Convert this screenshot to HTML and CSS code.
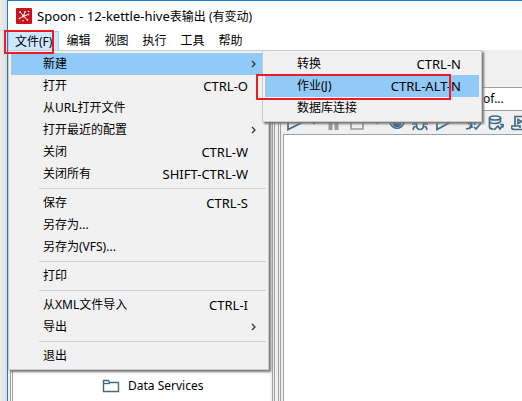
FILE: index.html
```html
<!DOCTYPE html>
<html lang="zh-CN">
<head>
<meta charset="utf-8">
<title>Spoon - 12-kettle-hive表输出 (有变动)</title>
<link rel="stylesheet" href="styles.css">
</head>
<body>
<div class="window">
  <header class="titlebar">
    <svg class="logo" viewBox="0 0 16 16" aria-hidden="true">
      <rect width="16" height="16" rx="1" fill="#c9101d"/>
      <g stroke="#fff" stroke-width="1" fill="#fff">
        <path d="M7.500 8 4 4M7.500 8 9 4M7.500 8l5-1.500M7.500 8l-4 2.500M7.500 8l4 4"/>
        <circle cx="7.500" cy="8" r="1"/><circle cx="4" cy="4" r=".5"/><circle cx="9" cy="3.800" r=".4"/>
        <circle cx="12.500" cy="6.500" r=".4"/><circle cx="3.500" cy="10.500" r=".4"/><circle cx="11.500" cy="12" r=".5"/>
      </g>
      <circle cx="12.500" cy="3.500" r=".8" fill="#fff"/><circle cx="7" cy="12.800" r=".8" fill="#fff"/>
    </svg>
    <h1><span class="latin">Spoon - 12-kettle-hive</span>表输出 (有变动)</h1>
  </header>

  <nav class="menubar">
    <div class="entry">
      <button class="top open">文件(F)</button>
      <div class="menu file-menu">
        <div class="parent">
          <button class="item active"><span>新建</span><svg class="chevron" viewBox="0 0 6 8"><path d="M1 1l3 3-3 3"/></svg></button>
          <div class="menu new-menu">
            <button class="item"><span>转换</span><kbd>CTRL-N</kbd></button>
            <button class="item active"><span>作业(J)</span><kbd>CTRL-ALT-N</kbd></button>
            <button class="item"><span>数据库连接</span></button>
            <i class="mark mark-job"></i>
          </div>
        </div>
        <button class="item"><span>打开</span><kbd>CTRL-O</kbd></button>
        <button class="item"><span>从URL打开文件</span></button>
        <button class="item"><span>打开最近的配置</span><svg class="chevron" viewBox="0 0 6 8"><path d="M1 1l3 3-3 3"/></svg></button>
        <button class="item"><span>关闭</span><kbd>CTRL-W</kbd></button>
        <button class="item"><span>关闭所有</span><kbd>SHIFT-CTRL-W</kbd></button>
        <hr>
        <button class="item"><span>保存</span><kbd>CTRL-S</kbd></button>
        <button class="item"><span>另存为...</span></button>
        <button class="item"><span>另存为(VFS)...</span></button>
        <hr>
        <button class="item"><span>打印</span></button>
        <hr>
        <button class="item"><span>从XML文件导入</span><kbd>CTRL-I</kbd></button>
        <button class="item"><span>导出</span><svg class="chevron" viewBox="0 0 6 8"><path d="M1 1l3 3-3 3"/></svg></button>
        <hr>
        <button class="item"><span>退出</span></button>
      </div>
      <i class="mark mark-file"></i>
    </div>
    <button class="top">编辑</button>
    <button class="top">视图</button>
    <button class="top">执行</button>
    <button class="top">工具</button>
    <button class="top">帮助</button>
  </nav>

  <main class="workspace">
    <aside class="explorer">
      <div class="tree">
        <div class="node">
          <svg class="folder" viewBox="0 0 18 14"><path d="M1.500 12.500v-11h5l1 2h9v9z"/><path d="M2 4.500h6"/></svg>
          <span>Data Services</span>
        </div>
      </div>
    </aside>
    <div class="sash"></div>
    <section class="editor">
      <div class="tab"><span>of...</span></div>
      <div class="toolbar">
        <svg class="tool" viewBox="0 0 16 16"><path d="M2 1.500v13L15 8z"/></svg>
        <svg class="drop" viewBox="0 0 10 4"><path d="M2 0h6L5 3.500z"/></svg>
        <svg class="tool muted" viewBox="0 0 16 16"><path d="M4.500 2v13M10.500 2v13" stroke-width="4"/></svg>
        <svg class="tool muted" viewBox="0 0 16 16"><path d="M2 2h12v12H2z"/></svg>
        <svg class="drop muted" viewBox="0 0 10 4"><path d="M2 0h6L5 3.500z"/></svg>
        <svg class="tool" viewBox="0 0 16 16"><path d="M1 8c3-6 11-6 14 0-3 7-11 7-14 0z"/><circle cx="8" cy="7.500" r="4" fill="#426a89"/></svg>
        <svg class="tool" viewBox="0 0 16 16"><path d="M4.500 6c0-4 7-4 7 0v4c0 6-7 6-7 0zM1 3l4 3M15 3l-4 3M0 9h5M16 9h-5M1 15l1-3 3-1M15 15l-1-3-3-1"/></svg>
        <svg class="tool" viewBox="0 0 16 16"><path d="M2 1.500v13L14 8z"/></svg>
        <svg class="tool first-check" viewBox="0 0 16 16"><path d="M1 14l4-1 1-4M6 5l1 8M3 9l3-2M9 12l2 2 5-6M9 7l1 3"/></svg>
        <svg class="tool" viewBox="0 0 16 16"><path d="M12.500 7V3M1.500 3v9c0 1.500 2 2 4 2"/><ellipse cx="7" cy="3" rx="5.500" ry="2"/><path d="M1.500 7c2 2 8 2 11 0M6 15l4-4 2 3 3-4M12 9.500h3v3"/></svg>
        <svg class="tool" viewBox="0 0 16 16"><path d="M4 11V1.500h11v13H3C0 14.500 0 11 1 11h8v2M7 4.500v4L10.500 6.500z"/></svg>
      </div>
      <div class="canvas"></div>
    </section>
  </main>
</div>
</body>
</html>
```

FILE: styles.css
```css
* { box-sizing: border-box; }
body {
  margin: 0;
  min-height: 100vh;
  padding-left: 7px;
  overflow: hidden;
  background: linear-gradient(90deg, #ececec, #dedede 7px);
  color: #000;
  font: 12px/22px "Noto Sans", "Noto Sans CJK SC", sans-serif;
}
button {
  margin: 0;
  padding: 0;
  border: 0;
  background: none;
  color: inherit;
  font: inherit;
}
.window {
  display: flex;
  flex-direction: column;
  height: 100vh;
  border-top: 1px solid #1979ca;
  border-left: 1px solid #1979ca;
  background: #f0f0f0;
}
.titlebar {
  display: flex;
  align-items: center;
  gap: 5px;
  height: 30px;
  padding-left: 8px;
  background: #fff;
}
.logo { width: 16px; height: 16px; }
h1 { margin: 0; font-size: 12px; font-weight: 400; white-space: nowrap; }
.latin, kbd { font-family: inherit; font-size: 13px; }

.menubar {
  display: flex;
  height: 19px;
  background: #fff;
}
.entry { position: relative; }
.top {
  display: block;
  height: 19px;
  padding: 0 7px;
  line-height: 19px;
  white-space: nowrap;
}
.top.open {
  padding: 0 6px;
  border: 1px solid #99d1ff;
  border-bottom: 0;
  background: #cce8ff;
}
.menu {
  position: absolute;
  z-index: 2;
  padding: 2px;
  border: 1px solid #ccc;
  background: #f1f1f1;
  box-shadow: 2px 2px 2px #777;
}
.file-menu { top: 100%; left: 0; width: 261px; }
.new-menu { top: -3px; left: 251px; width: 220px; }
.parent { position: relative; }
.item {
  display: flex;
  align-items: center;
  justify-content: space-between;
  width: 100%;
  height: 22px;
  padding: 0 18px 0 32px;
  white-space: nowrap;
}
.item.active { background: #91c9f7; }
.chevron {
  width: 6px;
  height: 8px;
  margin-right: -9px;
  fill: none;
  stroke: #333;
  stroke-width: 1.3;
}
hr {
  height: 1px;
  margin: 3px 0 3px 28px;
  border: 0;
  background: #d2d2d2;
}
.mark {
  position: absolute;
  z-index: 3;
  border: 2px solid #ed1c24;
  pointer-events: none;
}
.mark-file { top: -1px; left: -4px; width: 50px; height: 24px; }
.mark-job { top: 23px; left: -7px; width: 195px; height: 26px; }

.workspace {
  display: grid;
  grid-template-columns: 264px 9px 1fr;
  flex: 1;
  min-height: 0;
}
.explorer { padding: 0 2px; }
.tree {
  display: flex;
  flex-direction: column;
  justify-content: flex-end;
  height: 100%;
  padding-bottom: 4px;
  border-left: 3px double #a0a0a0;
  background: #fff;
}
.node { display: flex; align-items: center; gap: 8px; padding-left: 89px; }
.folder { width: 18px; height: 14px; fill: none; stroke: #426a89; stroke-width: 1.4; }
.sash {
  margin-top: 37px;
  border-left: 3px double #a0a0a0;
  border-right: 3px double #a0a0a0;
}
.editor {
  display: flex;
  flex-direction: column;
  min-width: 0;
  padding: 37px 0 0 2px;
}
.tab {
  height: 24px;
  padding-left: 200px;
  border: 1px solid #a0a0a0;
  border-width: 1px 0;
  background: #fff;
}
.toolbar {
  display: flex;
  align-items: center;
  gap: 7px;
  height: 24px;
  padding-left: 3px;
  overflow: hidden;
  border-bottom: 1px solid #a0a0a0;
}
.tool {
  flex: none;
  width: 16px;
  height: 16px;
  fill: none;
  stroke: #426a89;
  stroke-width: 1.7;
}
.tool.muted { stroke: #999; }
.first-check { margin-left: 7px; }
.drop { flex: none; width: 10px; height: 4px; fill: #333; }
.drop.muted { fill: #888; }
.canvas { flex: 1; border-left: 1px solid #a0a0a0; background: #fff; }
```
